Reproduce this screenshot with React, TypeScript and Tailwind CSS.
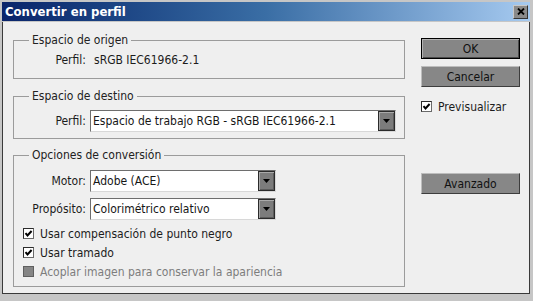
import type { ReactNode } from "react";

function Check({ checked, disabled }: { checked?: boolean; disabled?: boolean }) {
  if (disabled) {
    return <span className="block h-[11px] w-[11px] shrink-0 border border-[#5f5f5f] bg-[#858585]" />;
  }
  return (
    <span className="flex h-[11px] w-[11px] shrink-0 items-center justify-center border border-t-[#2c2c2c] border-l-[#2c2c2c] border-r-[#6a6a6a] border-b-[#6a6a6a] bg-white">
      {checked ? (
        <svg width="9" height="9" viewBox="0 0 9 9">
          <polyline points="1.5,4.2 3.5,6.4 7.6,2" fill="none" stroke="#000" strokeWidth="2" />
        </svg>
      ) : null}
    </span>
  );
}

function Select({ value, width }: { value: string; width: string }) {
  return (
    <div
      className={`flex h-[22px] items-stretch border border-t-[#6e6e6e] border-l-[#6e6e6e] border-r-[#d8d8d8] border-b-[#d8d8d8] bg-white ${width}`}
    >
      <span className="flex flex-1 items-center pl-[2px] text-[12px] text-[#161616]">{value}</span>
      <span className="flex w-[17px] items-center justify-center border border-[#2b2b2b] bg-[#7c7c7c] shadow-[inset_1px_1px_0_#a9a9a9,inset_-1px_-1px_0_#5c5c5c]">
        <svg width="7" height="4" viewBox="0 0 7 4">
          <path d="M0 0h7L3.5 4z" fill="#000" />
        </svg>
      </span>
    </div>
  );
}

function Button({ children, primary }: { children: ReactNode; primary?: boolean }) {
  return (
    <div
      className={
        primary
          ? "flex h-[21px] w-[99px] items-center justify-center border border-black bg-[#868686] text-[12px] text-[#111] shadow-[inset_1px_1px_0_#b3b3b3,inset_-1px_-1px_0_#4a4a4a]"
          : "flex h-[21px] w-[99px] items-center justify-center border border-t-[#bdbdbd] border-l-[#bdbdbd] border-r-[#3d3d3d] border-b-[#3d3d3d] bg-[#878787] text-[12px] text-[#111]"
      }
    >
      {children}
    </div>
  );
}

function Group({ title, className, children }: { title: string; className: string; children: ReactNode }) {
  return (
    <fieldset className={`w-[392px] border border-[#9b9b9b] ${className}`}>
      <legend className="ml-[15px] px-[3px] text-[12px] leading-[14px] text-[#222]">{title}</legend>
      {children}
    </fieldset>
  );
}

export default function App() {
  return (
    <div className="h-[301px] w-[533px] bg-[#c6c6c6] px-[2px] pt-[2px] font-['DejaVu_Sans_Condensed','DejaVu_Sans',sans-serif]">
      <div className="flex h-[19px] w-[528px] items-center justify-between bg-gradient-to-r from-[#0a246a] via-[#3a6ea5] to-[#a6caf0] pl-[3px] pr-[2px]">
        <span className="text-[13px] font-bold text-white">Convertir en perfil</span>
        <span className="flex h-[14px] w-[15px] items-center justify-center border border-t-[#c8c8c8] border-l-[#c8c8c8] border-r-[#333] border-b-[#333] bg-[#8a8a8a]">
          <svg width="8" height="7" viewBox="0 0 8 7">
            <path d="M1 0.5l6 6M7 0.5l-6 6" stroke="#000" strokeWidth="1.8" />
          </svg>
        </span>
      </div>

      <div className="mt-[1px] flex h-[272px] w-[528px] border-x border-b border-[#3a3a3a] bg-[#efefef] pl-[10px] text-[#1c1c1c]">
        <div className="pt-[11px]">
          <Group title="Espacio de origen" className="pt-[6px] pb-[11px]">
            <div className="flex h-[14px] items-center text-[12px]">
              <span className="w-[72px] text-right">Perfil:</span>
              <span className="ml-[8px]">sRGB IEC61966-2.1</span>
            </div>
          </Group>

          <Group title="Espacio de destino" className="mt-[10px] pt-[7px] pb-[6px]">
            <div className="flex items-center text-[12px]">
              <span className="w-[72px] text-right">Perfil:</span>
              <div className="ml-[4px]">
                <Select value="Espacio de trabajo RGB - sRGB IEC61966-2.1" width="w-[306px]" />
              </div>
            </div>
          </Group>

          <Group title="Opciones de conversión" className="mt-[9px] pt-[8px] pb-[5px]">
            <div className="flex items-center text-[12px]">
              <span className="w-[72px] text-right">Motor:</span>
              <div className="ml-[4px]">
                <Select value="Adobe (ACE)" width="w-[186px]" />
              </div>
            </div>
            <div className="mt-[6px] flex items-center text-[12px]">
              <span className="w-[72px] text-right">Propósito:</span>
              <div className="ml-[4px]">
                <Select value="Colorimétrico relativo" width="w-[186px]" />
              </div>
            </div>
            <div className="mt-[4px] flex flex-col pl-[9px] text-[12px]">
              <div className="flex h-[19px] items-center gap-[6px]">
                <Check checked />
                <span>Usar compensación de punto negro</span>
              </div>
              <div className="flex h-[19px] items-center gap-[6px]">
                <Check checked />
                <span>Usar tramado</span>
              </div>
              <div className="flex h-[19px] items-center gap-[6px]">
                <Check disabled />
                <span className="text-[#7d7d7d]">Acoplar imagen para conservar la apariencia</span>
              </div>
            </div>
          </Group>
        </div>

        <div className="ml-[16px] flex flex-col pt-[16px]">
          <Button primary>OK</Button>
          <div className="mt-[7px]">
            <Button>Cancelar</Button>
          </div>
          <div className="mt-[12px] flex h-[15px] items-center gap-[6px] text-[12px]">
            <Check checked />
            <span>Previsualizar</span>
          </div>
          <div className="mt-[59px]">
            <Button>Avanzado</Button>
          </div>
        </div>
      </div>
    </div>
  );
}
